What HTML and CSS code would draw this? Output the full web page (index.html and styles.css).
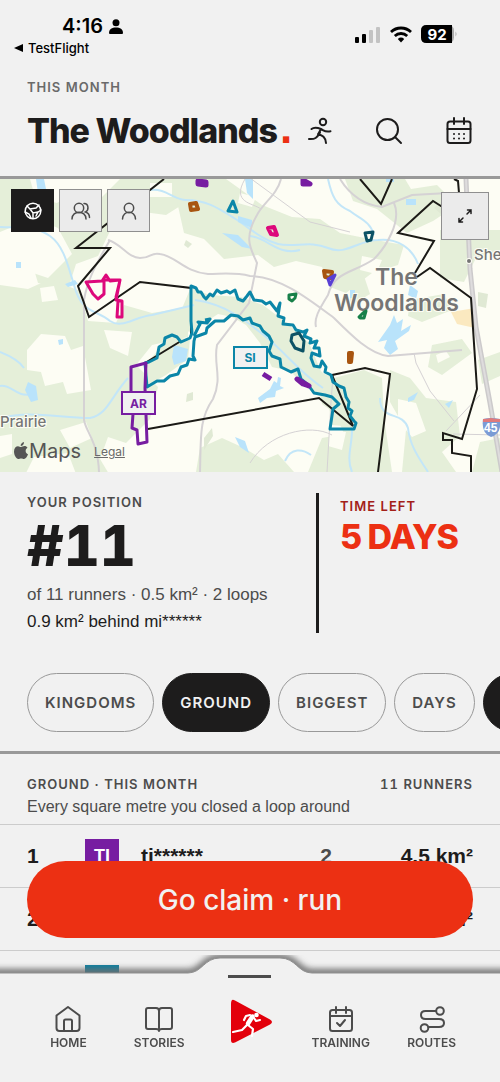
FILE: index.html
```html
<!DOCTYPE html>
<html lang="en">
  <head>
    <meta charset="UTF-8" />
    <meta name="viewport" content="width=device-width, initial-scale=1.0" />
    <title>The Woodlands</title>
    <link rel="stylesheet" href="styles.css">
  </head>
  <body>
    <div class="app">
      <div class="status">
        <div class="status-left">
          <div class="status-time">
            4:16
            <svg width="14" height="15" viewBox="0 0 14 15"><circle cx="7" cy="3.7" r="3.5"/><path d="M0 14c0-4 3-5.600 7-5.600s7 1.600 7 5.600q0 1-1 1H1q-1 0-1-1z"/></svg>
          </div>
          <a href="#" class="status-back"><svg width="9" height="8" viewBox="0 0 9 8"><path d="M0 4 9 0v8z"/></svg>TestFlight</a>
        </div>
        <div class="status-right">
          <svg width="26" height="17" viewBox="0 0 26 17"><rect y="11" width="4" height="6" rx="1"/><rect x="7" y="8" width="4" height="9" rx="1"/><g fill="#c3c3c3"><rect x="14" y="4" width="4" height="13" rx="1"/><rect x="21" y="1" width="4" height="16" rx="1"/></g></svg>
          <svg width="22" height="17" viewBox="0 0 22 17"><g fill="none" stroke="#000" stroke-width="2.800"><path d="M1 6a14.500 14.500 0 0 1 20 0"/><path d="M4.800 10a9 9 0 0 1 12.400 0"/></g><path d="M7.800 13a4.800 4.800 0 0 1 6.400 0L11 16.500z"/></svg>
          <svg width="37" height="19" viewBox="0 0 37 19"><rect width="33" height="18" rx="5.500" fill="#aaa"/><path d="M5.500 0H31v18H5.500Q0 18 0 12.500v-7Q0 0 5.500 0z"/><path d="M34.500 6.500q2 2.500 0 5z" fill="#aaa"/><text x="16" y="15" class="battery-text">92</text></svg>
        </div>
      </div>

      <header class="header">
        <p class="label label-soft">THIS MONTH</p>
        <div class="header-row">
          <h1 class="title">The Woodlands<span>.</span></h1>
          <div class="header-actions">
            <button type="button" aria-label="Run">
              <svg width="26" height="28" viewBox="0 0 26 28"><circle cx="16" cy="5" r="3.200"/><path d="M4.500 12c3-2.500 6-1.500 9.500 0 3 1.500 4 3.500 9.500 2.300M14 12c-1.500 3-2.700 4-3 6M2 22c6 .5 8-1 11-6.500M11 17c4.500 1.500 7.500 3 8 9"/></svg>
            </button>
            <button type="button" aria-label="Search">
              <svg width="28" height="28" viewBox="0 0 28 28"><circle cx="12.500" cy="12.500" r="10.500"/><path d="m20 20 6 6"/></svg>
            </button>
            <button type="button" aria-label="Calendar">
              <svg width="28" height="28" viewBox="0 0 28 28"><rect x="2.500" y="4.500" width="23" height="21.500" rx="2.500"/><path d="M2.500 12h23M9 1v6M19 1v6"/><path d="M9 17h.01M14 17h.01M19 17h.01M9 21.500h.01M14 21.500h.01M19 21.500h.01"/></svg>
            </button>
          </div>
        </div>
      </header>

      <section class="map">
        <svg class="map-canvas" viewBox="0 179 500 293" preserveAspectRatio="xMidYMid slice">
          <rect x="0" y="179" width="500" height="293" fill="#fdfdf4"/>
          <!-- woodland -->
          <g fill="#e5efd9">
            <path d="M0 179h30l5 18 22 6 13-8 30 4 20-20h60l8 22-22 14-30-4-26 20-12 25-22 8-8 25-30-6-10-34-28-6z"/>
            <path d="M0 285l28 4 22-10 30 12 8 30 28 2 8-18 28 8 36-6v30l-36 8-16 20 22 22-8 32-24 24-18-6-8 22 12 20H78l-10-26-34 4-10 20H0z"/>
            <path d="M172 179h54l14 10 22 16 30 12 28 2 20 14 30 6 34 6-6 20-26 8-26 20-16-6-8-20-26-6-22 6-16-12-34 4-20-20-20-6z"/>
            <path d="M191 287l18 8 32 2 22 8 24 18 22 20 12 28 20 22 13 34-22-2-4-24-22-14-16-16-18-4-12-24-14-18-14-8-14-3-12 8-13 10-20-2zM147 363l12-14 12-12 19 2-2 20-22 16-18 10z"/>
            <path d="M345 179h60l6 10 26-4 20 20-24 16-26 12-30-24-24-8z"/>
            <path d="M440 230h60v20l-24 8-12 24-24-4z M350 280l14-4 6 18-20 12z"/>
            <path d="M316 370l18 8 30-8 18 8 2 40 8 54h-84l14-34 22-4-8-20-14-10zM390 370l20 8 16 20 30 4 4 34-18 16 14 20h-54l4-42-16-28z"/>
            <path d="M432 345l30-6 10 14-30 22-14-8zM478 360l22-8v24l-18 8zM480 442l20-4v34h-28zM200 448l22-10 22 10 20 12 14-6 16 18H196zM410 300l34-6 8 16-30 12-14-6zM0 179h30v26H0z"/>
          </g>
          <!-- clearings -->
          <g fill="#fdfdf4">
            <path d="M27 350l14-16 24 2 6 14 12-4 8 44-24 4-4-12-18 4-4-14-14-2zM104 330l28 2-4 24-18-8zM60 430l26-8 6 16-22 10zM0 232l34-14 24 10 14 26-24 24-24-8-24 4zM40 288l14-2 4 14-16 2zM0 436l12-2v20l-12 4zM125 282l14 4-4 14-16-4zM240 193l16 4-4 10-14-4zM362 256l20 4-6 14-16-4zM398 399l18 4 10 28-14 6-14-16zM150 183h22v14h-22zM330 430l16 2-4 18-14-4zM436 355l10-4 4 6-12 6z"/>
          </g>
          <path d="M451 312l24-4v20l-18-4z" fill="#fbe9c0"/>
          <g fill="#e0e9d4"><path d="M186 240l6 4-4 4-4-3zM187 394l6-2v8l-7 2zM440 202l9 6-8 6-7-6zM204 438l8-10 1 8-9 14zM478 292l10 2-2 14-8-2z"/></g>
          <!-- water -->
          <g fill="none" stroke="#c3e6f8" stroke-width="2" stroke-linejoin="round">
            <path d="M0 227c20 1 34-2 50 9 14 10 18 30 24 49 8 30 22 24 36 36 12 8 24-4 42-6l42-10"/>
            <path d="M150 190c16-2 24 10 36 10 20 0 32 8 48 18s28 22 44 26 32-4 50 4 30-8 50-8c20-2 34 8 40 24"/>
            <path d="M328 179c4 18 8 26 22 32 10 8 20 10 24 24M0 418c30-8 60 0 90 0 18-4 20-20 38-40"/>
            <path d="M250 236c18 2 28 20 50 14M195 300c30 4 50 20 70 36 24 20 34 36 58 52M380 398c0 24 22 12 28 30 2 20 14 34 20 44M352 430c0 16-6 28 0 42M285 461c6-14 18-12 26-6"/>
            <path d="M0 352c10 4 20 10 24 16M0 386c12-2 16 12 32 8"/>
          </g>
          <g fill="#b9e3fb">
            <path d="M36 179h8l2 10-8 4zM222 233l16 2 14 14-10-2zM238 216l14 4v8l-14-6zM245 179h8v20l-6-6zM65 284l10-4 3 4-10 3zM174 345l14 4-2 12-12 4-2-8zM28 382l8 4 2 14-7 2-6-12zM58 340l5-1v5l-4 1zM16 262h5v6h-5z"/>
            <path d="M390 325l4-10 3 8 6-4-2 12 10-6-2 6-14 10 3 8-8 6-6-7 3-8-9 2zM410 285l8 6-2 8-8-4zM406 199h10v6h-10zM408 398l10-6-4 8-6 2zM445 404l8-4-4 8zM235 437l10 4 4 12-9-6z"/>
            <path d="m258 398 12-9 4-8 3 2 1-6 3 1-1 8 4 2-8 3-1 6-8 1-7 5zM350 290h5v8h-5zM386 179h8v3h-8z"/>
          </g>
          <!-- roads -->
          <g fill="none" stroke="#d5d2d4" stroke-width="2">
            <path d="M108 240c14 4 20 18 32 18 12 0 10-6 20-4 16 2 24 18 48 20 14 0 26-2 42 2 30 0 60 24 84 42 18 18 36 36 54 38l74-6"/>
            <path d="M110 240c-10 18-22 36-26 60l0 120c2 12 14 22 15 52M281 179c-4 16-18 24-24 36-14 24-6 34 0 48l-8 40-32 42c-4 20 6 32-4 54-14 20-12 38-13 73"/>
            <path d="M340 179c10 16 24 26 42 28l30-12 36-2M394 203c8 18-8 44-20 56-20 14-40 12-46 36-10 16-14 24-12 32"/>
            <path d="M245 179c-14 24 8 24 16 30M414 353l2 10 14 28 24 30M327 472l4-70 2-26M250 178l60 44 40 10" stroke-width="1"/>
            <path d="M250 463c18-30 60-40 82-28M453 434l47 1M480 395l-34 36" stroke-width="1"/>
          </g>
          <path d="M466 179l4 90 6 58 14 76 12 69" fill="none" stroke="#cccacb" stroke-width="5"/>
          <path d="M466 179l4 90 6 58 14 76 12 69" fill="none" stroke="#dedcdd" stroke-width="2"/>
          <g class="map-places">
            <text x="375" y="285" class="place-big">The</text>
            <text x="334" y="311" class="place-big">Woodlands</text>
            <circle cx="469" cy="261" r="2"/>
            <text x="474" y="260">She</text>
            <text x="0" y="427">Prairie</text>
          </g>
          <g>
            <path d="M483 419q4-1 8-1t9 1q2 15-9 18-10-4-8-18z" fill="#7b9bd5"/>
            <path d="M483 422v-3q4 0 8-1 4 1 9 1v3z" fill="#e07a7c"/>
            <text x="484" y="432" class="shield">45</text>
          </g>
          <!-- kingdom border -->
          <g fill="none" stroke="#1b1a16" stroke-width="2">
            <path d="M164 179 76 248h34L78 286l11 31 51-35 51 6v48M145 363l36-22M148 429l171-31 34 28-21-51 33-7 25 6-12 98"/>
            <path d="m360 179 21 25 11-25M454 179l4 2 1 12M444 208l-11-7-35 32 36 8-19 32M417 277l13-9 41 30 6 91-15 50-19-6v7h9v13l19 3v16"/>
          </g>
          <!-- loops -->
          <g fill="none" stroke="#0b86a8" stroke-width="3" stroke-linejoin="round">
            <path d="M191 286L196 288L198 292L201 292L204 297L206 299L210 294L213 296L217 290L221 293L227 291L230 293L235 290L238 299L243 301L247 296L250 292L254 300L262 301L266 304L270 302L277 311L280 303L278 316L284 318L283 324L293 325L296 330L303 332L307 330L304 336L311 339L310 343L317 341L314 348L319 348L320 356L312 353L311 358L314 366L320 367L322 361L326 367L325 372L331 375L333 382L339 386L344 388L346 397L349 402L348 408L352 411L350 416L354 421L356 423L354 429L330 429L333 409L339 404L332 397L325 395L314 393L309 386L301 379L298 369L291 372L281 367L280 359L272 356L269 351L272 342L269 336L263 331L260 326L252 323L250 318L243 320L238 316L231 315L224 321L215 321L207 328L206 333L195 337L194 341L193 356L195 360L189 359L187 365L181 367L178 374L170 376L164 381L157 381L147 387L145 363L149 362L157 358L159 347L164 344L165 338L172 335L177 337L181 342L190 338L192 333L191 321z"/>
            <path d="m194 336 6-12-2-2 9 1 3-4-5 1M233 201l4 11-9-1z"/>
          </g>
          <g fill="none" stroke="#771da1" stroke-width="3" stroke-linejoin="round">
            <path d="m131 367 15-4-1 25 2 54-9 2-1-14-5-2 1-14-2-15z"/>
            <path d="m198 181 8 1v3l-8-1zM303 180l7 4h-7zM263 374l8 5M297 379l12 7-6-2z" stroke-width="5"/>
          </g>
          <g fill="none" stroke-width="4" stroke-linejoin="round">
            <path d="m86 282 16-1 4-6 4 6 10-1-4 20 6 1v16h-5l1-16-2-4 4-17-16 0v14l-6 5-5-5z" stroke="#dd087b" stroke-width="3"/>
            <path d="m268 228 6-1 3 8-6-1z" stroke="#dd087b"/>
            <path d="m190 204 6-1 2 6-7 1zM324 271l8 1-1 6-6-1z" stroke="#a85510"/>
            <path d="M349 353h3l-1 9h-2z" stroke="#a85510"/>
            <path d="m328 279 7-4-5 10z" stroke="#5940d4" stroke-width="3"/>
            <path d="m365 233 8-1-2 8-4 1z" stroke="#0c5265" stroke-width="3"/>
            <path d="m292 335 7-2 5 8-1 10-8-3-4-7z" stroke="#0c5265" stroke-width="3"/>
            <path d="m289 295 7-1-1 4-3 3-3-2zM359 317l4-4 3-2-2 7h-4z" stroke="#178049" stroke-width="3"/>
          </g>
          <g class="map-tags">
            <rect x="122" y="392" width="33" height="22" stroke="#771da1"/><text x="138.500" y="408" fill="#771da1">AR</text>
            <rect x="234" y="347" width="33" height="21" stroke="#0b86a8"/><text x="250" y="362" fill="#0b86a8">SI</text>
          </g>
        </svg>
        <div class="map-tools">
          <div class="map-filters">
            <button type="button" class="map-btn active" aria-label="Everyone">
              <svg width="20" height="20" viewBox="0 0 20 20"><circle cx="10" cy="10" r="7.800"/><path d="m4 5 3 3 6-1 3-3M7 8l3 4 5-1 3-2M10 12v5M2 11l4 2 2 4M15 11l-2 4"/></svg>
            </button>
            <button type="button" class="map-btn" aria-label="Friends">
              <svg width="22" height="20" viewBox="0 0 22 20"><circle cx="9" cy="7" r="4.700"/><path d="M2 18c0-9 14-9 14 0M14 2.500c5 0 5 7 1.500 8.500 3 1 4 3 4 5.500"/></svg>
            </button>
            <button type="button" class="map-btn" aria-label="Only me">
              <svg width="20" height="20" viewBox="0 0 20 20"><circle cx="10" cy="7" r="4.700"/><path d="M3.500 18c0-9 13-9 13 0"/></svg>
            </button>
          </div>
          <button type="button" class="map-btn map-expand" aria-label="Expand map">
            <svg width="20" height="20" viewBox="0 0 20 20"><path d="m12 8 4-4M12.500 4H16v3.500M8 12l-4 4M4 12.500V16h3.500"/></svg>
          </button>
        </div>
        <div class="map-legal">
          <span class="map-brand"><svg width="14" height="18" viewBox="0 0 14 18"><path d="M10 0c0 2.500-1.500 4-3.300 4C6.500 2 8 .4 10 0zM7 5c1 0 2-1 3.500-1 1.200 0 2.400.7 3 1.700-2.800 1.800-2.200 5.300.5 6.500-.8 2.300-2.300 4.800-4 4.800-1 0-1.600-.6-2.800-.6S5.200 17 4.300 17C2.200 17 0 13 0 9.500 0 6 2.100 4.200 4 4.200 5.300 4.200 6.200 5 7 5z"/></svg>Maps</span>
          <a href="#">Legal</a>
        </div>
      </section>

      <section class="stats">
        <div class="stats-main">
          <p class="label">YOUR POSITION</p>
          <p class="rank">#11</p>
          <p class="detail">of 11 runners · 0.5 km² · 2 loops</p>
          <p class="detail detail-dark">0.9 km² behind mi******</p>
        </div>
        <div class="stats-side">
          <p class="label label-red">TIME LEFT</p>
          <p class="days">5 DAYS</p>
        </div>
      </section>

      <nav class="chips">
        <button type="button" class="chip">KINGDOMS</button>
        <button type="button" class="chip chip-on">GROUND</button>
        <button type="button" class="chip">BIGGEST</button>
        <button type="button" class="chip">DAYS</button>
        <button type="button" class="chip chip-on" aria-label="More"></button>
      </nav>

      <section class="board">
        <div class="board-head">
          <div class="board-title">
            <h2 class="label">GROUND · THIS MONTH</h2>
            <span class="label">11 RUNNERS</span>
          </div>
          <p class="board-note">Every square metre you closed a loop around</p>
        </div>
        <table class="rows">
          <tr><td class="pos">1</td><td class="tag"><span class="purple">TI</span></td><td>ti******</td><td class="loops">2</td><td class="area">4.5 km²</td></tr>
          <tr><td class="pos">2</td><td class="tag"></td><td></td><td class="loops"></td><td class="area">km²</td></tr>
          <tr><td class="pos"></td><td class="tag"><span class="teal"></span></td><td></td><td class="loops"></td><td class="area">km²</td></tr>
        </table>
      </section>
    </div>

    <div class="dock">
      <button type="button" class="cta">Go claim · run</button>
      <nav class="tabs">
        <svg class="tabs-shape" viewBox="0 0 500 132" preserveAspectRatio="xMidYMin meet">
          <defs>
            <filter id="soft" x="-10%" y="-20%" width="120%" height="140%"><feGaussianBlur stdDeviation="3"/></filter>
          </defs>
          <path d="M-1000 23H188C202 23 204 8 220 8h60c16 0 18 15 32 15h1188" fill="none" stroke="#707070" stroke-width="8" filter="url(#soft)"/>
          <path d="M-1000 23H188C202 23 204 8 220 8h60c16 0 18 15 32 15h1188v200h-2500z" fill="#f1f1f1" stroke="#909090"/>
        </svg>
        <div class="tabs-row">
          <a href="#" class="tab">
            <svg width="28" height="28" viewBox="0 0 28 28"><path d="M2.500 10.500 14 2l11.500 8.500V23q0 3-3 3h-17q-3 0-3-3z"/><path d="M10 26V16q0-1.500 1.500-1.500h5q1.500 0 1.500 1.500v10"/></svg>
            HOME
          </a>
          <a href="#" class="tab">
            <svg width="28" height="28" viewBox="0 0 28 28"><path d="M14 6q0-3-3-3H3q-2 0-2 2v17q0 2 2 2h8q3 0 3 2 0-2 3-2h8q2 0 2-2V5q0-2-2-2h-8q-3 0-3 3v20"/></svg>
            STORIES
          </a>
          <a href="#" class="tab tab-run" aria-label="Run">
            <svg width="44" height="48" viewBox="0 0 44 48">
              <path d="M3 6v36q0 4 4 2.500l35-18q4-2.500 0-5L7 2.500Q3 0 3 6z" fill="#e3000b" stroke="none"/>
              <circle cx="28.500" cy="17" r="2.300" fill="#fff" stroke="none"/>
              <path d="m24.500 18.500-4.500 7" stroke-width="4.500"/>
              <path d="m22 17-4 1-2 4M26 20l2 3 4-1M19 27l-5 5-9 2M20 27l5 4-1 7" stroke-width="2.200"/>
            </svg>
          </a>
          <a href="#" class="tab">
            <svg width="28" height="28" viewBox="0 0 28 28"><rect x="3" y="5" width="22" height="21" rx="2.500"/><path d="M3 11h22M9 2v6M19 2v6M10 18l3 3 5-6"/></svg>
            TRAINING
          </a>
          <a href="#" class="tab">
            <svg width="28" height="28" viewBox="0 0 28 28"><circle cx="22" cy="6" r="3.800"/><circle cx="6.500" cy="23" r="3.800"/><path d="M18 6H7.500q-4.500 0-4.500 4t4.500 4H21q5 0 5 4t-5 4H10.500"/></svg>
            ROUTES
          </a>
        </div>
      </nav>
    </div>
  </body>
</html>
```
FILE: styles.css
```css
* {
  box-sizing: border-box;
}

body {
  margin: 0;
  background: #f1f1f1;
  color: #1d1c1c;
  font-family: "Liberation Sans", Arial, sans-serif;
}

h1,
h2,
p {
  margin: 0;
}

button {
  padding: 0;
  border: none;
  background: none;
  color: inherit;
  font-family: inherit;
  cursor: pointer;
}

a {
  color: inherit;
  text-decoration: none;
}

.app {
  display: flex;
  flex-direction: column;
  height: 100vh;
  overflow: hidden;
}

.app > * {
  flex-shrink: 0;
}

/* status bar */
.status {
  display: flex;
  justify-content: space-between;
  padding: 14px 42px 0 14px;
  height: 79px;
  color: #000;
  font-family: Inter, sans-serif;
}

.status-time {
  display: flex;
  align-items: center;
  gap: 6px;
  padding-left: 48px;
  font-size: 20px;
  line-height: 24px;
  font-weight: 600;
}

.status-back {
  display: flex;
  align-items: center;
  gap: 5px;
  font-size: 13px;
  line-height: 20px;
  font-weight: 500;
}

.status-right {
  display: flex;
  align-items: center;
  gap: 9px;
  height: 40px;
}

.battery-text {
  fill: #fff;
  font-size: 15px;
  font-weight: 700;
  text-anchor: middle;
}

/* header */
.header {
  padding: 0 27px;
  height: 100px;
  border-bottom: 3px solid #999;
}

.label {
  color: #4c4c4c;
  font-family: Inter, sans-serif;
  font-size: 13px;
  line-height: 16px;
  font-weight: 600;
  letter-spacing: 1px;
  font-variant-numeric: tabular-nums;
}

.label-soft {
  color: #6a6a6a;
}

.label-red {
  color: #a32018;
}

.header-row {
  display: flex;
  justify-content: space-between;
  align-items: center;
  margin-top: 16px;
  height: 40px;
}

.title {
  font-family: Inter, sans-serif;
  font-size: 34px;
  line-height: 40px;
  font-weight: 800;
  letter-spacing: -1px;
  white-space: nowrap;
}

.title span {
  margin-left: 3px;
  color: #ec3013;
  font-family: "Liberation Sans", Arial, sans-serif;
  font-size: 44px;
  line-height: 0;
}

.header-actions {
  display: flex;
  gap: 42px;
}

.header-actions button {
  display: flex;
}

.header-actions svg {
  fill: none;
  stroke: #1d1c1c;
  stroke-width: 2;
  stroke-linecap: round;
  stroke-linejoin: round;
}

/* map */
.map {
  position: relative;
  height: 293px;
}

.map-canvas {
  display: block;
  width: 100%;
  height: 100%;
}

.map-places {
  fill: #757575;
  font-family: Inter, sans-serif;
  font-size: 15px;
  font-weight: 500;
  stroke: #fdfdf4;
  stroke-width: 2px;
  paint-order: stroke;
}

.place-big {
  font-size: 23px;
  font-weight: 600;
}

.shield {
  fill: #fff;
  font-size: 12px;
  font-weight: 700;
}

.map-tags {
  font-family: Inter, sans-serif;
  font-size: 12px;
  font-weight: 700;
  text-anchor: middle;
}

.map-tags rect {
  fill: #f1f1f1;
  stroke-width: 2px;
}

.map-tools {
  position: absolute;
  top: 10px;
  left: 11px;
  right: 11px;
  display: flex;
  justify-content: space-between;
}

.map-filters {
  display: flex;
  gap: 5px;
}

.map-btn {
  display: flex;
  align-items: center;
  justify-content: center;
  width: 43px;
  height: 43px;
  border: 1px solid #8f8f8f;
  background: #ebebeb;
}

.map-btn svg {
  fill: none;
  stroke: #4c4c4c;
  stroke-width: 1.5px;
  stroke-linecap: round;
}

.map-btn.active {
  border-color: #1d1c1c;
  background: #1d1c1c;
}

.map-btn.active svg {
  stroke: #fff;
}

.map-expand {
  width: 48px;
  height: 48px;
  margin-top: 3px;
}

.map-expand svg {
  stroke: #1d1c1c;
}

.map-legal {
  position: absolute;
  left: 14px;
  bottom: 9px;
  display: flex;
  align-items: center;
  gap: 13px;
  color: #6a6a6a;
  font-family: Inter, sans-serif;
  font-size: 12px;
}

.map-legal a {
  text-decoration: underline;
}

.map-brand {
  display: flex;
  align-items: center;
  gap: 1px;
  color: #555;
  font-size: 20px;
  line-height: 24px;
}

.map-brand svg {
  fill: #555;
}

/* position and time left */
.stats {
  display: flex;
  justify-content: space-between;
  padding: 21px 27px 0;
}

.stats-main {
  padding-top: 1px;
}

.stats-side {
  width: 157px;
  height: 140px;
  padding: 5px 0 0 21px;
  border-left: 3px solid #1d1c1c;
  white-space: nowrap;
}

.rank {
  padding-top: 2px;
  font-family: Inter, sans-serif;
  font-size: 56px;
  line-height: 69px;
  font-weight: 800;
  font-variant-numeric: tabular-nums;
}

.days {
  margin-top: 5px;
  color: #ec3013;
  font-family: Inter, sans-serif;
  font-size: 34px;
  line-height: 36px;
  font-weight: 800;
  letter-spacing: -1px;
}

.detail {
  color: #4c4c4c;
  font-size: 17px;
  line-height: 27px;
}

.detail-dark {
  color: #1d1c1c;
}

/* filter chips */
.chips {
  display: flex;
  gap: 8px;
  margin-top: 38px;
  padding: 0 0 19px 27px;
  border-bottom: 3px solid #999;
  overflow: hidden;
}

.chip {
  flex-shrink: 0;
  min-width: 79px;
  height: 59px;
  padding: 0 17px;
  border: 1px solid #999;
  border-radius: 30px;
  color: #4c4c4c;
  font-family: Inter, sans-serif;
  font-size: 15px;
  font-weight: 600;
  letter-spacing: 1px;
}

.chip-on {
  border-color: #1d1c1c;
  background: #1d1c1c;
  color: #f1f1f1;
}

/* leaderboard */
.app .board {
  flex: 1 1 0;
  min-height: 0;
  overflow: hidden;
}

.board-head {
  padding: 22px 27px 6px;
}

.board-title {
  display: flex;
  justify-content: space-between;
}

.board-note {
  margin-top: 4px;
  color: #4c4c4c;
  font-size: 16px;
  line-height: 22px;
}

.rows {
  width: 100%;
  border-collapse: collapse;
  font-size: 21px;
  font-weight: 700;
}

.rows td {
  height: 63px;
  padding: 0;
  border-top: 1px solid #ccc;
}

.rows .pos {
  width: 85px;
  padding-left: 27px;
}

.rows .tag {
  width: 56px;
}

.tag span {
  display: block;
  width: 34px;
  height: 34px;
  color: #fff;
  font-size: 18px;
  line-height: 34px;
  text-align: center;
}

.purple {
  background: #771da1;
}

.teal {
  background: #0b7fa0;
}

.rows .loops {
  width: 60px;
  color: #4c4c4c;
  text-align: right;
}

.rows .area {
  width: 168px;
  padding-right: 27px;
  text-align: right;
}

/* bottom dock lies over the list */
.dock {
  position: fixed;
  left: 0;
  right: 0;
  bottom: 0;
  overflow: hidden;
}

.cta {
  display: block;
  width: calc(100% - 54px);
  height: 77px;
  margin: 0 27px 12px;
  border-radius: 39px;
  background: #ec3013;
  color: #f1f1f1;
  font-family: Inter, sans-serif;
  font-size: 28px;
  font-weight: 500;
}

.tabs {
  position: relative;
  height: 132px;
}

.tabs-shape {
  position: absolute;
  top: 0;
  left: 0;
  width: 100%;
  height: 132px;
  overflow: visible;
}

.tabs-row {
  position: relative;
  display: grid;
  grid-template-columns: repeat(5, 1fr);
  padding: 25px 23px 0;
}

.tab {
  display: flex;
  flex-direction: column;
  align-items: center;
  gap: 3px;
  padding-top: 30px;
  color: #4c4c4c;
  font-family: Inter, sans-serif;
  font-size: 12px;
  line-height: 14px;
  font-weight: 600;
}

.tab svg {
  fill: none;
  stroke: #4c4c4c;
  stroke-width: 2;
  stroke-linecap: round;
  stroke-linejoin: round;
}

.tab-run {
  padding-top: 0;
}

.tab-run::before {
  content: "";
  width: 43px;
  height: 3px;
  margin-bottom: 17px;
  background: #4c4c4c;
}

.tab-run svg {
  stroke: #fff;
}
```
